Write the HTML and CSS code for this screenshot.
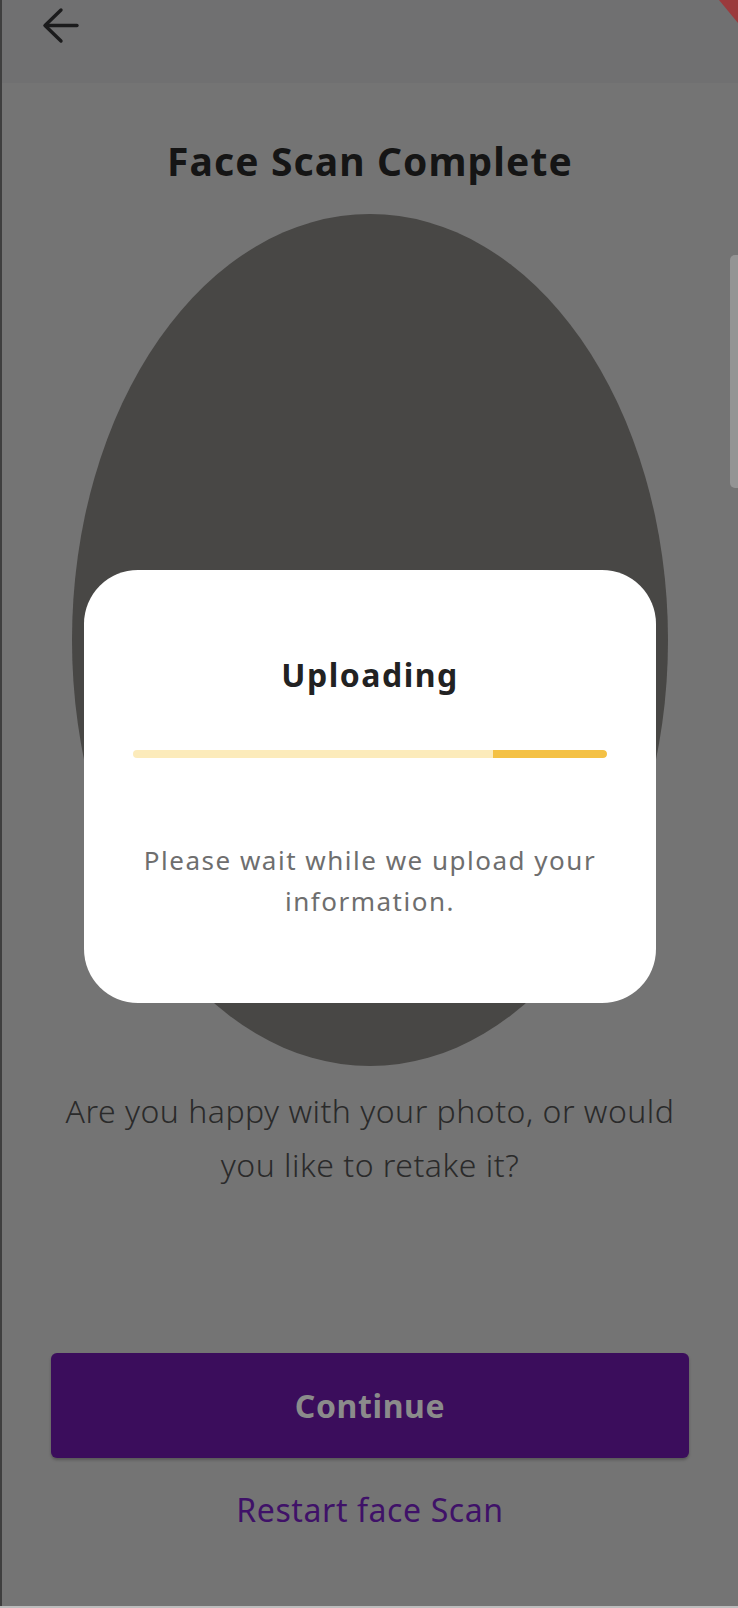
FILE: index.html
```html
<!DOCTYPE html>
<html lang="en">
<head>
<meta charset="utf-8">
<title>Face Scan Complete</title>
<link rel="stylesheet" href="styles.css">
</head>
<body>
  <div class="device">
    <div class="screen">
      <header class="appbar">
        <button class="back" aria-label="Back">
          <svg width="40" height="40" viewBox="0 0 40 40" fill="none" stroke="#1b1b1c" stroke-width="3.4" stroke-linecap="round" stroke-linejoin="round">
            <path d="M21 5 L5 20.5 L21 36"/>
            <path d="M5.5 20.5 H37"/>
          </svg>
        </button>
      </header>
      <main class="content">
        <h1 class="title">Face Scan Complete</h1>
        <div class="face-oval"></div>
        <p class="question">Are you happy with your photo, or would you like to retake it?</p>
        <div class="actions">
          <button class="btn-primary">Continue</button>
          <a class="link-restart" href="#">Restart face Scan</a>
        </div>
      </main>
    </div>
    <div class="home-line"></div>
  </div>

  <div class="dialog" role="dialog">
    <h2 class="dialog-title">Uploading</h2>
    <div class="progress"><div class="progress-fill" style="width:114px"></div></div>
    <p class="dialog-text">Please wait while we upload your information.</p>
  </div>

  <div class="debug-banner"></div>
  <div class="scroll-thumb"></div>
</body>
</html>
```

FILE: styles.css
```css
html, body {
  margin: 0;
  padding: 0;
}

body {
  width: 738px;
  height: 1608px;
  overflow: hidden;
  position: relative;
  background: #747474;
  font-family: "Noto Sans", "Open Sans", sans-serif;
}

.device {
  display: flex;
  flex-direction: column;
  height: 1608px;
}

.screen {
  flex: 1;
  display: flex;
  flex-direction: column;
  border-left: 2px solid #3f3f3f;
  background: #747474;
}

.appbar {
  height: 83px;
  background: #707071;
  display: flex;
  align-items: flex-start;
  padding: 5px 0 0 38px;
  box-sizing: border-box;
}

.back {
  border: 0;
  background: none;
  padding: 0;
  width: 40px;
  height: 40px;
  display: block;
}

.back svg {
  display: block;
}

.content {
  display: flex;
  flex-direction: column;
  align-items: center;
}

.title {
  margin: 51px 0 0;
  font-size: 39px;
  line-height: 53px;
  font-weight: 700;
  color: #151515;
  letter-spacing: 1.1px;
}

.face-oval {
  margin-top: 27px;
  width: 596px;
  height: 852px;
  border-radius: 50%;
  background: #484745;
}

.question {
  margin: 18px 0 0;
  width: 625px;
  text-align: center;
  font-size: 32px;
  line-height: 54px;
  font-weight: 300;
  color: #2a2a2a;
  letter-spacing: 0.5px;
}

.actions {
  margin-top: 161px;
  display: flex;
  flex-direction: column;
  align-items: center;
  width: 638px;
}

.btn-primary {
  width: 638px;
  height: 105px;
  border: 0;
  border-radius: 6px;
  background: #3b0d5c;
  box-shadow: 0 2px 3px rgba(0, 0, 0, 0.25);
  color: #8b8b8b;
  font-family: "Noto Sans", "Open Sans", sans-serif;
  font-size: 32px;
  font-weight: 700;
  letter-spacing: 0.6px;
}

.link-restart {
  margin-top: 30px;
  font-size: 32px;
  line-height: 44px;
  color: #3f1168;
  text-decoration: none;
  letter-spacing: 0.6px;
}

.home-line {
  height: 2px;
  background: #bdbdbd;
  margin-top: auto;
}

.dialog {
  position: absolute;
  left: 84px;
  top: 570px;
  width: 572px;
  height: 433px;
  box-sizing: border-box;
  padding: 83px 49px 0;
  background: #ffffff;
  border-radius: 54px;
  display: flex;
  flex-direction: column;
  align-items: center;
}

.dialog-title {
  margin: 0;
  font-size: 32px;
  line-height: 44px;
  font-weight: 700;
  color: #222222;
  letter-spacing: 1.5px;
}

.progress {
  margin-top: 53px;
  width: 474px;
  height: 8px;
  border-radius: 4px;
  background: #fcebbb;
  display: flex;
  justify-content: flex-end;
  overflow: hidden;
}

.progress-fill {
  height: 100%;
  background: #f4c145;
  border-radius: 0 4px 4px 0;
}

.dialog-text {
  margin: 82px 0 0;
  text-align: center;
  font-size: 26px;
  line-height: 41px;
  color: #6e6e6e;
  letter-spacing: 1.5px;
}

.debug-banner {
  position: absolute;
  top: 0;
  right: 0;
  width: 19px;
  height: 23px;
  background: #9b3a3c;
  clip-path: polygon(0 0, 100% 0, 100% 100%);
}

.scroll-thumb {
  position: absolute;
  right: 0;
  top: 255px;
  width: 8px;
  height: 233px;
  border-radius: 5px 0 0 5px;
  background: #949494;
}
```
